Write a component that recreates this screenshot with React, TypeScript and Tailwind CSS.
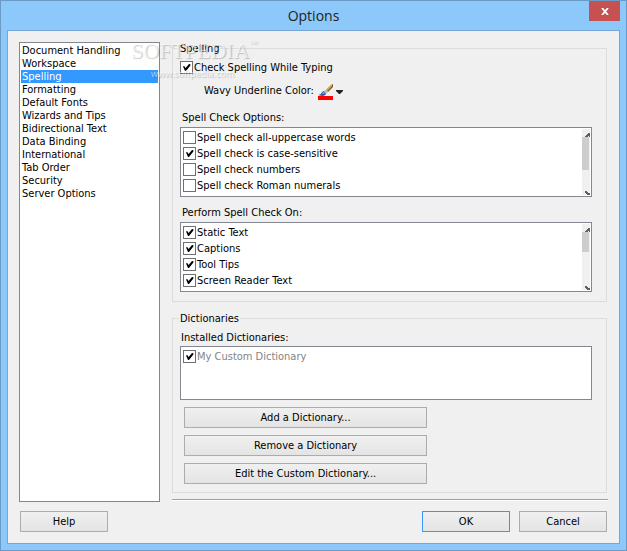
import { InputHTMLAttributes, ReactNode } from "react";

const CATEGORIES = [
    "Document Handling",
    "Workspace",
    "Spelling",
    "Formatting",
    "Default Fonts",
    "Wizards and Tips",
    "Bidirectional Text",
    "Data Binding",
    "International",
    "Tab Order",
    "Security",
    "Server Options",
];

const SPELL_OPTIONS = [
    { label: "Spell check all-uppercase words", checked: false },
    { label: "Spell check is case-sensitive", checked: true },
    { label: "Spell check numbers", checked: false },
    { label: "Spell check Roman numerals", checked: false },
];

const SPELL_TARGETS = [
    { label: "Static Text", checked: true },
    { label: "Captions", checked: true },
    { label: "Tool Tips", checked: true },
    { label: "Screen Reader Text", checked: true },
];

interface CheckFieldProps extends InputHTMLAttributes<HTMLInputElement> {
    label: string;
}

function CheckField({ label, className = "", ...props }: CheckFieldProps) {
    return (
        <label className={`flex items-start gap-px ${className}`}>
            <span className="grid size-[13px] shrink-0">
                <input
                    type="checkbox"
                    className="peer col-start-1 row-start-1 size-[13px] appearance-none border border-[#707070] bg-white"
                    {...props}
                />
                <svg
                    viewBox="0 0 13 13"
                    className="pointer-events-none invisible col-start-1 row-start-1 size-[13px] peer-checked:visible"
                >
                    <path d="M3 5.5 4.2 5 5.6 7 9 3l1.4.2V4.6L6 10H5z" />
                </svg>
            </span>
            <span>{label}</span>
        </label>
    );
}

function Group({
    title,
    className,
    children,
}: {
    title: string;
    className: string;
    children: ReactNode;
}) {
    return (
        <fieldset
            className={`min-w-0 border border-[#dcdcdc] pl-[7px] ${className}`}
        >
            <legend className="-ml-px px-px">{title}</legend>
            {children}
        </fieldset>
    );
}

function ScrollBar({ thumb }: { thumb: string }) {
    return (
        <div className="flex w-2 shrink-0 flex-col bg-[#f0f0f0]">
            <svg viewBox="0 0 8 8" className="size-2" fill="#606060">
                <path d="M3 8V7h1V6h1V5h1V4h2v4H7V7H6v1z" />
            </svg>
            <div className={`w-[7px] bg-[#cdcdcd] ${thumb}`} />
            <svg viewBox="0 0 8 8" className="mt-auto size-2" fill="#606060">
                <path d="M3 4h2v1h1v1h2v2H5V7H4V6H3z" />
            </svg>
        </div>
    );
}

function CheckList({
    label,
    items,
    thumb,
}: {
    label: string;
    items: { label: string; checked: boolean }[];
    thumb: string;
}) {
    return (
        <div
            role="group"
            aria-label={label}
            className="flex h-[70px] justify-between border border-[#828790] bg-white py-px pr-px pl-[2px]"
        >
            <div className="pt-[2px]">
                {items.map((item) => (
                    <CheckField
                        key={item.label}
                        label={item.label}
                        defaultChecked={item.checked}
                        className="h-4"
                    />
                ))}
            </div>
            <ScrollBar thumb={thumb} />
        </div>
    );
}

function Button({
    className = "",
    children,
}: {
    className?: string;
    children: ReactNode;
}) {
    return (
        <button
            type="button"
            className={`h-[21px] border bg-linear-to-b from-[#f0f0f0] to-[#e4e4e4] text-center ${className}`}
        >
            {children}
        </button>
    );
}

function BrushIcon() {
    return (
        <svg viewBox="0 0 15 16" className="h-4 w-[15px]">
            <path d="m8 6 5-5 2-1v3l-5 5z" fill="#7d5a2c" />
            <path d="m8 6 5-5h1v1L9 7z" fill="#e8b04a" />
            <path d="m6 7 2-1 2 2-2 2z" fill="#b9bcc8" />
            <path d="M0 11q3 0 4-3l2-1 2 3q-1 2-4 2z" fill="#35579c" />
            <path d="m4 9 2-1 1 1-2 1z" fill="#8fb0e6" />
            <path d="M0 12h15v4H0z" fill="#f00" />
        </svg>
    );
}

function Watermark() {
    return (
        <div
            aria-hidden="true"
            className="pointer-events-none absolute top-[35px] left-[130px] font-['Liberation_Serif',serif] text-white/60 [text-shadow:1px_1px_1px_rgb(0_0_0/0.22)]"
        >
            <div className="flex items-start">
                <span className="text-[22px] leading-[30px]">SOFTPEDIA</span>
                <span className="text-[8px] leading-[16px]">™</span>
            </div>
            <div className="pl-5 font-['Open_Sans',sans-serif] text-[9px] leading-[16px]">
                www.softpedia.com
            </div>
        </div>
    );
}

export default function App() {
    return (
        <div className="relative flex min-h-screen flex-col border border-[#6a9ac6] bg-[#8dc8fa] px-[6px] pb-[6px] font-['DejaVu_Sans_Condensed','DejaVu_Sans',sans-serif] text-[11px] leading-[13px] text-black">
            <header className="grid h-[29px] grid-cols-[31px_1fr_31px] items-start">
                <h1 className="col-start-2 pt-[5px] text-center font-['Open_Sans',sans-serif] text-[14px] leading-[20px] text-[#222]">
                    Options
                </h1>
                <button
                    type="button"
                    aria-label="Close"
                    className="flex h-5 items-center justify-center bg-[#c75050]"
                >
                    <svg viewBox="0 0 8 7" className="h-[7px] w-2">
                        <path
                            d="M1 0 7 7M7 0 1 7"
                            stroke="#fff"
                            strokeWidth="1.8"
                        />
                    </svg>
                </button>
            </header>

            <main className="flex grow flex-col border border-[#78a6d4] bg-[#f0f0f0] px-[11px] py-[11px]">
                <div className="flex grow gap-3">
                    <ul
                        role="listbox"
                        aria-label="Categories"
                        className="w-[141px] shrink-0 border border-[#828790] bg-white p-px"
                    >
                        {CATEGORIES.map((name) => (
                            <li
                                key={name}
                                role="option"
                                aria-selected={name === "Spelling"}
                                className="pl-px aria-selected:bg-[#3399ff] aria-selected:text-white"
                            >
                                {name}
                            </li>
                        ))}
                    </ul>

                    <div className="flex min-w-0 grow flex-col pb-px">
                        <Group title="Spelling" className="mr-px pr-[14px] pb-[9px]">
                            <CheckField
                                label="Check Spelling While Typing"
                                defaultChecked
                                className="mt-[6px]"
                            />
                            <div className="mt-[10px] flex items-start pl-6">
                                <span id="underline-color">Wavy Underline Color:</span>
                                <button
                                    type="button"
                                    aria-labelledby="underline-color"
                                    className="ml-1 flex items-center gap-[3px]"
                                >
                                    <BrushIcon />
                                    <svg viewBox="0 0 7 4" className="h-1 w-[7px]">
                                        <path d="M0 0h7v1L4 4H3L0 1z" fill="#222" />
                                    </svg>
                                </button>
                            </div>
                            <p className="mt-[11px] mb-[3px] pl-[2px]">
                                Spell Check Options:
                            </p>
                            <CheckList
                                label="Spell Check Options"
                                items={SPELL_OPTIONS}
                                thumb="h-[33px]"
                            />
                            <p className="mt-[9px] mb-[3px] pl-[2px]">
                                Perform Spell Check On:
                            </p>
                            <CheckList
                                label="Perform Spell Check On"
                                items={SPELL_TARGETS}
                                thumb="h-5"
                            />
                        </Group>

                        <Group
                            title="Dictionaries"
                            className="mt-[10px] mr-px pr-[14px] pb-2"
                        >
                            <p className="mt-[6px] mb-[2px] pl-px">
                                Installed Dictionaries:
                            </p>
                            <div className="h-[54px] border border-[#828790] bg-white pt-[3px] pl-[2px]">
                                <CheckField
                                    label="My Custom Dictionary"
                                    defaultChecked
                                    disabled
                                    className="text-[#838383]"
                                />
                            </div>
                            <div className="mt-[7px] flex w-3/5 flex-col gap-[7px] pl-1">
                                <Button className="border-[#acacac]">
                                    Add a Dictionary...
                                </Button>
                                <Button className="border-[#acacac]">
                                    Remove a Dictionary
                                </Button>
                                <Button className="border-[#acacac]">
                                    Edit the Custom Dictionary...
                                </Button>
                            </div>
                        </Group>

                        <hr className="mt-auto h-[2px] border-t border-b border-t-[#a0a0a0] border-b-white" />
                    </div>
                </div>

                <footer className="mt-[9px] flex gap-[9px] px-px">
                    <Button className="mr-auto w-[88px] border-[#acacac]">Help</Button>
                    <Button className="w-[88px] border-[#3399ff]">OK</Button>
                    <Button className="w-[88px] border-[#acacac]">Cancel</Button>
                </footer>
            </main>
            <Watermark />
        </div>
    );
}
